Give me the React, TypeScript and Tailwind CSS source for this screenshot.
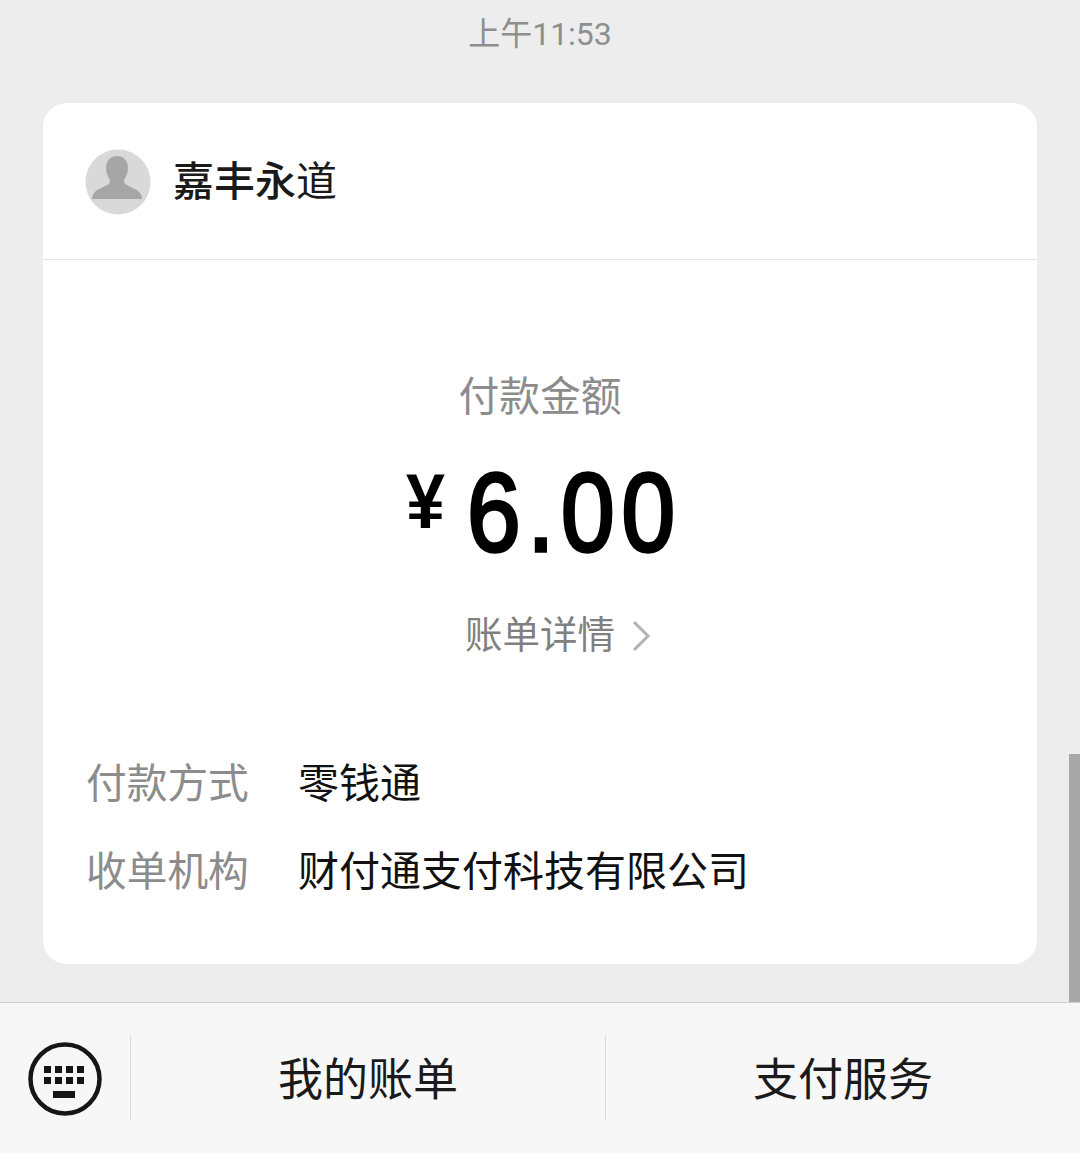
const cjk = "font-['Roboto','Noto_Sans_CJK_SC',sans-serif]"

const InfoRow = ({label, value}: {label: string; value: string}) => (
  <div className="flex h-[88px] items-center">
    <span className="w-[212px] shrink-0 text-[40.7px] leading-none text-[#8c8c8c]">{label}</span>
    <span className="text-[41px] leading-none text-[#111]">{value}</span>
  </div>
)

const Avatar = () => (
  <svg width="66" height="66" viewBox="0 0 66 66" className="mt-[2px] shrink-0">
    <circle cx="33" cy="33" r="32.500" fill="#d9d9d9" />
    <path
      d="M32 7c-7 0-11 5-11 12 0 5 2 9 4 12v2c-1 4-12 6-15 10-2 2-3 4-3 7h50c0-3-1-5-3-7-3-4-14-6-15-10v-2c2-3 4-7 4-12 0-7-4-12-11-12z"
      fill="#a6a6a6"
    />
  </svg>
)

const KeyboardIcon = () => (
  <svg width="74" height="74" viewBox="0 0 74 74" className="shrink-0">
    <circle cx="37" cy="37" r="34.500" fill="none" stroke="#161616" strokeWidth="4.500" />
    <g fill="#161616">
      <rect x="16" y="24" width="7" height="7" />
      <rect x="27" y="24" width="7" height="7" />
      <rect x="38" y="24" width="7" height="7" />
      <rect x="49" y="24" width="7" height="7" />
      <rect x="16" y="35" width="7" height="7" />
      <rect x="27" y="35" width="7" height="7" />
      <rect x="38" y="35" width="7" height="7" />
      <rect x="49" y="35" width="7" height="7" />
      <rect x="25" y="49" width="22" height="7" />
    </g>
  </svg>
)

export default function App() {
  return (
    <div className={`relative flex h-[1153px] w-[1080px] flex-col overflow-hidden bg-[#ededed] ${cjk}`}>
      <div className="flex h-[1002px] flex-col items-center">
        <div className="flex h-[68px] items-center text-[32px] leading-none text-[#8e8e8e]">上午11:53</div>

        <div className="mt-[35px] h-[861px] w-[994px] rounded-[24px] bg-white">
          <div className="flex h-[157px] items-center gap-[22px] border-b border-[#e5e5e5] pl-[42px]">
            <Avatar />
            <span className="mt-[2px] text-[41px] leading-none text-[#1a1a1a]">
              <span className="font-medium">嘉丰永</span>道
            </span>
          </div>

          <div className="flex flex-col items-center">
            <div className="mt-[117px] text-[40.8px] leading-none text-[#8c8c8c]">付款金额</div>
            <div className="mt-[39px] flex h-[112px] w-[268px] items-center text-black">
              <span className="mb-[16px] mr-[22px] origin-bottom scale-y-[1.12] font-['Liberation_Sans'] text-[70px] font-bold leading-none">¥</span>
              <span className="origin-left scale-x-[0.86] whitespace-nowrap font-['Liberation_Sans'] text-[112px] leading-none tracking-[8px] [-webkit-text-stroke:3.5px_black]">6.00</span>
            </div>
            <div className="ml-[36px] mt-[48px] flex items-center gap-[16px]">
              <span className="text-[37.5px] leading-none text-[#808080]">账单详情</span>
              <svg width="20" height="32" viewBox="0 0 20 32" className="shrink-0">
                <path d="M3 2l14 14L3 30" fill="none" stroke="#b2b2b2" strokeWidth="3" />
              </svg>
            </div>
          </div>

          <div className="mt-[86px] flex flex-col pl-[43px]">
            <InfoRow label="付款方式" value="零钱通" />
            <InfoRow label="收单机构" value="财付通支付科技有限公司" />
          </div>
        </div>
      </div>

      <div className="flex h-[151px] items-center border-t border-[#cfcfcf] bg-[#f7f7f7]">
        <div className="flex h-[86px] w-[131px] items-center justify-center border-r border-[#dcdcdc] pt-[2px]">
          <KeyboardIcon />
        </div>
        <div className="flex h-[86px] w-[475px] items-center justify-center border-r border-[#dcdcdc] pt-[4px] text-[45px] leading-none text-[#1a1a1a]">
          我的账单
        </div>
        <div className="flex h-[86px] flex-1 items-center justify-center pt-[4px] text-[45px] leading-none text-[#1a1a1a]">
          支付服务
        </div>
      </div>

      <div className="absolute right-0 top-[754px] h-[248px] w-[11px] bg-[#a8a8a8]" />
    </div>
  )
}
